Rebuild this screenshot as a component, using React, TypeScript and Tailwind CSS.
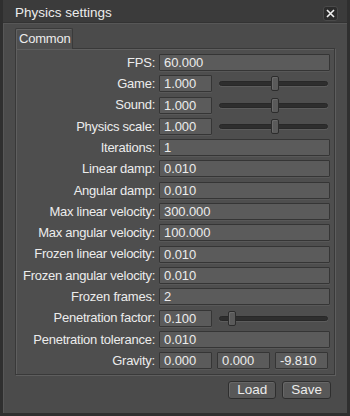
import React from "react";

const font = { fontFamily: '"Liberation Sans", Arial, sans-serif' };

function Field({ value, className = "" }: { value: string; className?: string }) {
  return (
    <div
      className={`h-[17px] bg-[#5b5b5b] border border-[#353535] shadow-[0_1px_0_#585858] rounded-[1px] pl-[4px] text-[13px] tracking-[-0.1px] leading-[15px] text-[#ececec] ${className}`}
    >
      {value}
    </div>
  );
}

function Slider({ pos }: { pos: number }) {
  return (
    <div className="relative flex-1 h-[17px] ml-[7px] mr-[2px]">
      <div className="absolute left-0 right-0 top-[6px] h-[5px] rounded-full bg-[#2e2e2e] border border-[#282828] shadow-[0_1px_0_#5c5c5c]" />
      <div
        className="absolute top-[1px] w-[8px] h-[15px] rounded-[2px] bg-[#5a5a5a] border border-[#2c2c2c] shadow-[inset_1px_1px_0_#6a6a6a]"
        style={{ left: `${pos}px` }}
      />
    </div>
  );
}

type Row = { label: string; value?: string; slider?: number; triple?: string[] };

const rows: Row[] = [
  { label: "FPS:", value: "60.000" },
  { label: "Game:", value: "1.000", slider: 52 },
  { label: "Sound:", value: "1.000", slider: 52 },
  { label: "Physics scale:", value: "1.000", slider: 52 },
  { label: "Iterations:", value: "1" },
  { label: "Linear damp:", value: "0.010" },
  { label: "Angular damp:", value: "0.010" },
  { label: "Max linear velocity:", value: "300.000" },
  { label: "Max angular velocity:", value: "100.000" },
  { label: "Frozen linear velocity:", value: "0.010" },
  { label: "Frozen angular velocity:", value: "0.010" },
  { label: "Frozen frames:", value: "2" },
  { label: "Penetration factor:", value: "0.100", slider: 9 },
  { label: "Penetration tolerance:", value: "0.010" },
  { label: "Gravity:", triple: ["0.000", "0.000", "-9.810"] },
];

export default function App() {
  return (
    <div className="w-[350px] h-[416px] bg-[#2f2f2f] flex flex-col select-none" style={font}>
      {/* Title bar */}
      <div className="h-[23px] mx-[3px] bg-[#3b3b3b] flex items-center justify-between pl-[12px] pr-[9px] pt-[4px] border-b border-[#333]">
        <span className="text-[13.5px] text-[#ececec] leading-[16px]">Physics settings</span>
        <div className="w-[15px] h-[15px] rounded-[3px] bg-[#2c2c2c] border border-[#4a4a4a] flex items-center justify-center">
          <svg width="9" height="9" viewBox="0 0 9 9">
            <path d="M1 1 L8 8 M8 1 L1 8" stroke="#f0f0f0" strokeWidth="1.6" />
          </svg>
        </div>
      </div>
      {/* Body */}
      <div className="flex-1 mx-[3px] mb-[3px] bg-[#4b4b4b] border-l border-t border-[#575757] pl-[11px] pr-[11px] pt-[4px] flex flex-col">
        {/* Tab */}
        <div className="flex">
          <div className="h-[21px] w-[58px] bg-[#4f4f4f] border border-b-0 border-[#3a3a3a] shadow-[inset_1px_1px_0_#626262] rounded-t-[2px] flex items-center pl-[3px] text-[13px] tracking-[-0.2px] text-[#ececec] relative z-10 -mb-[1px]">
            Common
          </div>
        </div>
        {/* Panel */}
        <div className="h-[327px] w-[320px] bg-[#4e4e4e] border border-[#393939] shadow-[inset_1px_1px_0_#5f5f5f,1px_1px_0_#5e5e5e] pt-[5px] pr-[4px] flex flex-col gap-[4.3px]">
          {rows.map((r) => (
            <div key={r.label} className="flex items-center h-[17px]">
              <div className="w-[143px] text-right text-[13px] tracking-[-0.25px] text-[#ececec] pr-[4px] whitespace-nowrap">
                {r.label}
              </div>
              {r.triple ? (
                <div className="flex-1 flex gap-[5px]">
                  {r.triple.map((v, i) => (
                    <Field key={i} value={v} className="w-[53px]" />
                  ))}
                </div>
              ) : r.slider !== undefined ? (
                <div className="flex-1 flex items-center">
                  <Field value={r.value!} className="w-[53px]" />
                  <Slider pos={r.slider} />
                </div>
              ) : (
                <Field value={r.value!} className="flex-1" />
              )}
            </div>
          ))}
        </div>
        {/* Buttons */}
        <div className="flex justify-end gap-[6px] mt-[6px] pr-[5px]">
          {["Load", "Save"].map((b) => (
            <div
              key={b}
              className="h-[18px] px-[8px] min-w-[45px] rounded-[3px] bg-[#585858] border border-[#2e2e2e] shadow-[inset_1px_1px_0_#676767] flex items-center justify-center text-[13.5px] text-[#ececec]"
            >
              {b}
            </div>
          ))}
        </div>
      </div>
    </div>
  );
}
